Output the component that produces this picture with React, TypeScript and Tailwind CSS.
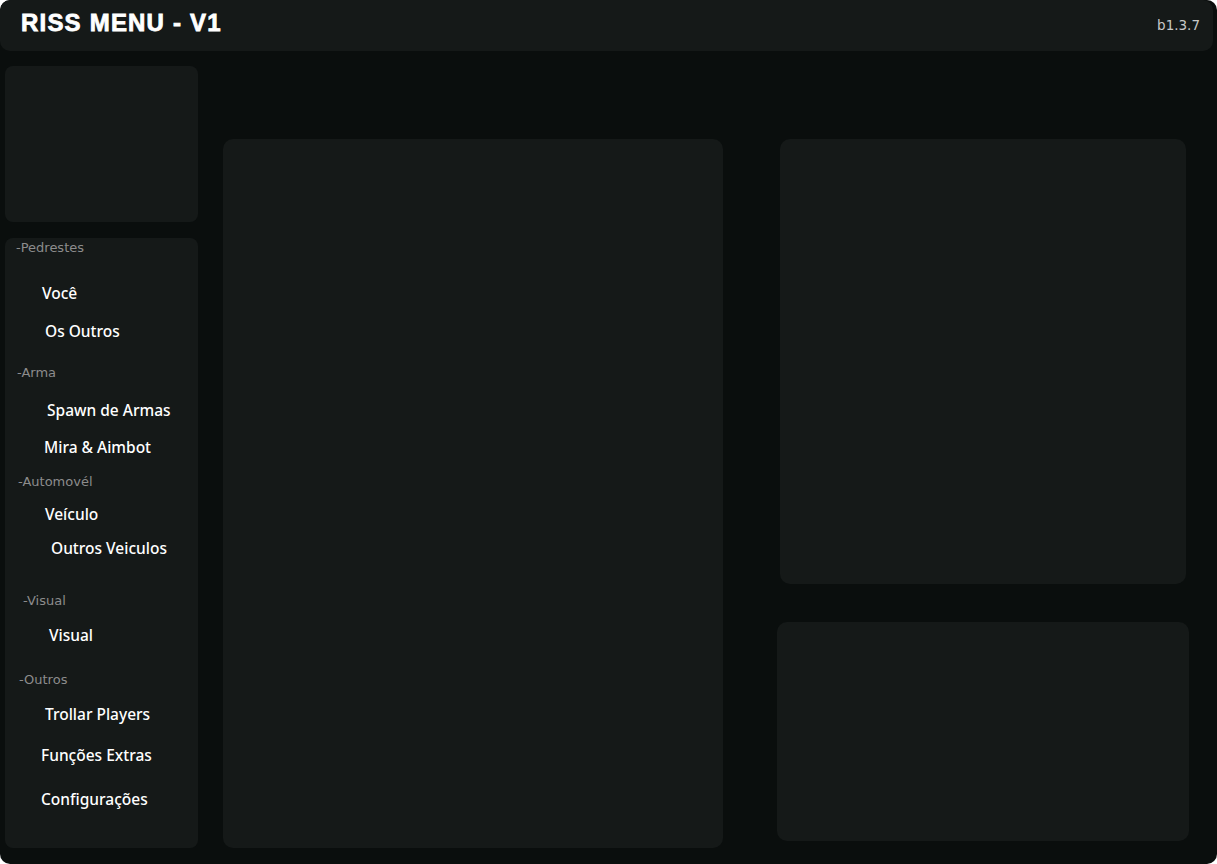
const sections: { label: string; header?: boolean; ml: number; mt: number }[] = [
  { label: '-Pedrestes', header: true, ml: 11, mt: 0 },
  { label: 'Você', ml: 37, mt: 25 },
  { label: 'Os Outros', ml: 40, mt: 18 },
  { label: '-Arma', header: true, ml: 12, mt: 22 },
  { label: 'Spawn de Armas', ml: 42, mt: 17 },
  { label: 'Mira & Aimbot', ml: 39, mt: 17 },
  { label: '-Automovél', header: true, ml: 13, mt: 15 },
  { label: 'Veículo', ml: 40, mt: 12 },
  { label: 'Outros Veiculos', ml: 46, mt: 14 },
  { label: '-Visual', header: true, ml: 18, mt: 33 },
  { label: 'Visual', ml: 44, mt: 14 },
  { label: '-Outros', header: true, ml: 14, mt: 25 },
  { label: 'Trollar Players', ml: 40, mt: 14 },
  { label: 'Funções Extras', ml: 36, mt: 21 },
  { label: 'Configurações', ml: 36, mt: 24 },
];

function App() {
  return (
    <div className="w-[1217px] h-[864px] bg-white overflow-hidden">
      <div className="w-full h-full bg-[#0a0e0d] rounded-[10px] overflow-hidden flex flex-col">
        {/* Header */}
        <div className="h-[51px] w-[1213px] bg-[#151918] rounded-[10px] flex items-center justify-between pl-[21px] pr-[13px] shrink-0">
          <span className="text-white text-[24px] font-bold tracking-[1.2px] [-webkit-text-stroke:0.8px_white] [font-family:'Liberation_Sans',Arial,sans-serif] -mt-[6px]">
            RISS MENU - V1
          </span>
          <span className="text-[#c8c8c8] text-[13.5px] [font-family:'DejaVu_Sans',Tahoma,sans-serif]">
            b1.3.7
          </span>
        </div>

        <div className="flex items-start">
          {/* Sidebar */}
          <div className="ml-[5px] w-[193px] flex flex-col">
            <div className="mt-[15px] h-[156px] bg-[#151918] rounded-[8px]"></div>
            <div className="mt-[16px] h-[610px] bg-[#151918] rounded-[8px] flex flex-col items-start">
              {sections.map((s) => (
                <div
                  key={s.label}
                  style={{ marginLeft: s.ml, marginTop: s.mt }}
                  className={
                    s.header
                      ? "h-[20px] leading-[20px] text-[13px] text-[#8c8c8c] [font-family:'DejaVu_Sans',Tahoma,sans-serif]"
                      : "h-[20px] leading-[20px] text-[15.5px] text-white font-medium [font-family:'Noto_Sans',Tahoma,sans-serif]"
                  }
                >
                  {s.label}
                </div>
              ))}
            </div>
          </div>

          {/* Center panel */}
          <div className="ml-[25px] mt-[88px] w-[500px] h-[709px] bg-[#151918] rounded-[10px]"></div>

          {/* Right column */}
          <div className="flex flex-col mt-[88px]">
            <div className="ml-[57px] w-[406px] h-[445px] bg-[#151918] rounded-[10px]"></div>
            <div className="ml-[54px] mt-[38px] w-[412px] h-[219px] bg-[#151918] rounded-[10px]"></div>
          </div>
        </div>
      </div>
    </div>
  );
}

export default App;
